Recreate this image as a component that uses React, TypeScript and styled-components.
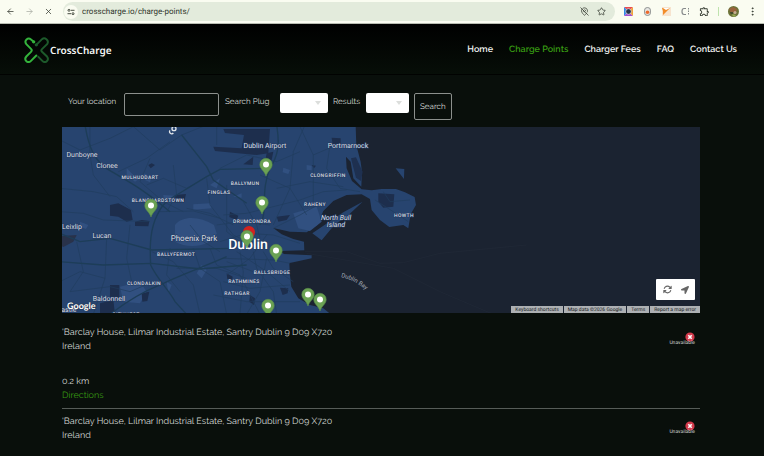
import React from "react";
import styled, { createGlobalStyle } from "styled-components";
import { ArrowLeft, ArrowRight, X, MapPinOff, Star, EllipsisVertical } from "lucide-react";
import { MdOutlineExtension } from "react-icons/md";
import { FaLocationArrow } from "react-icons/fa";
import { FaArrowsRotate } from "react-icons/fa6";

const GlobalStyle = createGlobalStyle`
  * { box-sizing: border-box; }
  html, body { margin: 0; min-height: 100%; background: #090f0b; }
  body { font-family: Raleway, Lato, "Open Sans", sans-serif; color: #d6dad6; text-rendering: geometricPrecision; }
  button, input, select { font: inherit; color: inherit; text-rendering: inherit; }
`;

const BrowserBar = styled.div`
  display: flex;
  align-items: center;
  height: 24px;
  padding: 0 2px 0 4px;
  background: #fafcf1;
  border-bottom: 1px solid #b9bdb2;
  color: #454b40;
`;

const BarButton = styled.button<{ $faded?: boolean; $wide?: number }>`
  display: flex;
  align-items: center;
  justify-content: center;
  width: ${(p) => p.$wide ?? 19}px;
  height: 18px;
  padding: 0;
  border: 0;
  background: none;
  color: ${(p) => (p.$faded ? "#a9ada4" : "#353b31")};
`;

const AddressPill = styled.div`
  display: flex;
  align-items: center;
  flex: 1;
  height: 19px;
  margin: 0 4px 0 1px;
  padding: 0 5px 0 1px;
  border-radius: 10px;
  background: #e3ebdc;
`;

const SiteInfo = styled.button`
  display: flex;
  align-items: center;
  justify-content: center;
  width: 14px;
  height: 14px;
  padding: 0;
  border: 0;
  border-radius: 50%;
  background: #fafcf1;
`;

const Address = styled.input`
  flex: 1;
  min-width: 0;
  height: 16px;
  margin-left: 4px;
  padding: 0;
  border: 0;
  outline: 0;
  background: none;
  font-family: Roboto, sans-serif;
  font-size: 8px;
  color: #30372c;
`;

const Divider = styled.span`
  width: 1px;
  height: 9px;
  margin: 0 5px 0 4px;
  background: #bfe3ae;
`;

const Header = styled.header`
  display: flex;
  align-items: center;
  justify-content: space-between;
  height: 51px;
  padding: 1px 27px 0 24px;
  background: linear-gradient(#000, #070e08);
  border-bottom: 1px solid #010201;
`;

const Brand = styled.a`
  display: flex;
  align-items: center;
  gap: 1px;
  color: #f4f6f4;
  text-decoration: none;
  font-family: "Noto Sans", sans-serif;
  font-weight: 600;
  font-size: 10px;
`;

const Nav = styled.nav`
  display: flex;
  gap: 16px;
`;

const NavLink = styled.a<{ $active?: boolean }>`
  font-size: 9px;
  line-height: 12px;
  padding-top: 1px;
  font-weight: 600;
  text-decoration: none;
  color: ${(p) => (p.$active ? "#379a12" : "#f0f2f0")};
`;

const Main = styled.main`
  padding: 18px 64px 0 62px;
`;

const SearchForm = styled.form`
  display: flex;
  align-items: flex-start;
  height: 34px;
  padding-left: 6px;
  font-size: 8px;
  line-height: 17px;
`;

const FieldLabel = styled.label<{ $width: number }>`
  width: ${(p) => p.$width}px;
  white-space: nowrap;
`;

const LocationInput = styled.input`
  width: 95px;
  height: 23px;
  margin-right: 6px;
  padding: 0 6px;
  border: 1px solid #8c908d;
  border-radius: 2px;
  background: transparent;
`;

const SelectBox = styled.span<{ $width: number }>`
  position: relative;
  width: ${(p) => p.$width}px;
  height: 20px;
  margin-right: 5px;
  svg { position: absolute; right: 7px; top: 8px; pointer-events: none; }
`;

const Select = styled.select`
  display: block;
  width: 100%;
  height: 100%;
  padding: 0 14px 0 4px;
  appearance: none;
  border: 0;
  border-radius: 2px;
  background: #fff;
  color: #fff;
`;

const SearchButton = styled.button`
  height: 27px;
  padding: 0 5px;
  border: 1px solid #8c908d;
  border-radius: 2px;
  background: transparent;
`;

const MapFrame = styled.section`
  position: relative;
  height: 186px;
  overflow: hidden;
  background: #1b2331;
`;

const MapDrawing = styled.svg`
  display: block;
  width: 100%;
  height: 100%;
`;

const MapControls = styled.div`
  position: absolute;
  right: 5px;
  bottom: 13px;
  display: flex;
  height: 21px;
  padding: 0 2px 0 3px;
  border-radius: 1px;
  background: #fff;
`;

const MapControl = styled.button`
  display: flex;
  align-items: center;
  justify-content: center;
  width: 17px;
  padding: 0;
  border: 0;
  background: none;
  color: #666;
`;

const Attribution = styled.div`
  position: absolute;
  right: 0;
  bottom: 0;
  display: flex;
  gap: 1px;
`;

const attributionStyle = `
  height: 7px;
  padding: 0 4px;
  border: 0;
  background: #adb0b3;
  color: #15181c;
  font-family: Roboto, sans-serif;
  font-size: 5px;
  line-height: 8px;
  white-space: nowrap;
  text-decoration: none;
`;
const AttributionButton = styled.button`&& {${attributionStyle}}`;
const AttributionText = styled.span`${attributionStyle}`;
const AttributionLink = styled.a`${attributionStyle}`;

const GoogleMark = styled.a`
  position: absolute;
  left: 5px;
  bottom: 0;
  color: #fff;
  font-family: Lato, sans-serif;
  font-weight: 700;
  font-size: 9px;
  line-height: 14px;
  text-decoration: none;
  text-shadow: 0 0 1px #222;
`;

const Results = styled.ul`
  margin: 0;
  padding: 7px 0 0;
  list-style: none;
`;

const Result = styled.li`
  display: flex;
  justify-content: space-between;
  align-items: flex-start;
  padding: 6px 5px 5px 0;
  border-bottom: 1px solid #565c58;
  font-size: 9px;
  line-height: 14px;
`;

const Line = styled.p`
  margin: 0;
`;

const Distance = styled(Line)`
  margin-top: 21px;
`;

const Directions = styled.a`
  color: #379a12;
  text-decoration: none;
`;

const Status = styled.div`
  display: flex;
  flex-direction: column;
  align-items: flex-end;
  padding-top: 6px;
  font-family: Roboto, sans-serif;
  font-size: 5px;
  line-height: 3px;
  color: #d0d4d1;
`;

function Logo() {
  return (
    <svg width="25" height="26" viewBox="72 110 75 77" fill="none" strokeWidth="6" strokeLinecap="round" aria-hidden="true">
      <path stroke="#1d5a2b" d="M109 133 L126 116 C134 109 148 119 142 130 L126 146 C123 149 123 151 126 154 L141 168 C149 179 136 190 127 181 L115 169" />
      <path stroke="#34b33c" d="M101 124 L93 117 C84 109 71 120 79 131 L93 145 C96 148 96 151 93 154 L79 168 C70 179 84 190 93 181 L109 165" />
      <circle cx="101" cy="124" r="5" fill="#34b33c" />
      <circle cx="109" cy="133" r="5" fill="#1d5a2b" />
    </svg>
  );
}

type Label = { x: number; y: number; text: string; kind: "town" | "area" | "park" | "city" | "sea" };
const labels: Label[] = [
  { x: 20, y: 30, text: "Dunboyne", kind: "town" },
  { x: 45, y: 41, text: "Clonee", kind: "town" },
  { x: 203, y: 21, text: "Dublin Airport", kind: "town" },
  { x: 286, y: 21, text: "Portmarnock", kind: "town" },
  { x: 10, y: 102, text: "Leixlip", kind: "town" },
  { x: 40, y: 111, text: "Lucan", kind: "town" },
  { x: 47, y: 174, text: "Baldonnell", kind: "town" },
  { x: 5, y: 185, text: "castle", kind: "town" },
  { x: 78, y: 52, text: "MULHUDDART", kind: "area" },
  { x: 96, y: 75, text: "BLANCHARDSTOWN", kind: "area" },
  { x: 157, y: 67, text: "FINGLAS", kind: "area" },
  { x: 183, y: 58, text: "BALLYMUN", kind: "area" },
  { x: 266, y: 50, text: "CLONGRIFFIN", kind: "area" },
  { x: 253, y: 79, text: "RAHENY", kind: "area" },
  { x: 190, y: 96, text: "DRUMCONDRA", kind: "area" },
  { x: 342, y: 90, text: "HOWTH", kind: "area" },
  { x: 114, y: 129, text: "BALLYFERMOT", kind: "area" },
  { x: 210, y: 147, text: "BALLSBRIDGE", kind: "area" },
  { x: 182, y: 156, text: "RATHMINES", kind: "area" },
  { x: 175, y: 168, text: "RATHGAR", kind: "area" },
  { x: 82, y: 158, text: "CLONDALKIN", kind: "area" },
  { x: 64, y: 189, text: "CITYWEST", kind: "area" },
  { x: 132, y: 114, text: "Phoenix Park", kind: "park" },
  { x: 274, y: 93, text: "North Bull", kind: "sea" },
  { x: 274, y: 100, text: "Island", kind: "sea" },
  { x: 186, y: 122, text: "Dublin", kind: "city" },
];

const MapLabel = styled.text<{ $kind: Label["kind"] }>`
  font-family: Roboto, sans-serif;
  text-anchor: middle;
  fill: ${(p) => (p.$kind === "city" ? "#fff" : "#d9dde3")};
  font-size: ${(p) => ({ town: 7, area: 5, park: 8, city: 14, sea: 7 })[p.$kind]}px;
  font-weight: ${(p) => (p.$kind === "area" || p.$kind === "city" ? 500 : 400)};
  font-style: ${(p) => (p.$kind === "sea" ? "italic" : "normal")};
  letter-spacing: ${(p) => (p.$kind === "area" ? "0.08em" : "normal")};
  paint-order: stroke;
  stroke: #223a60;
  stroke-width: 1px;
`;

const pins = [[204, 49], [200, 87], [89, 90], [185, 121], [214, 135], [246, 179], [258, 184], [206, 190]];

const motorways = [
  "M75 0 C85 60 100 110 155 140 C215 175 260 200 330 260",
  "M365 30 L440 125 L460 165 L560 235",
  "M650 0 C660 60 655 90 630 130 C600 200 625 260 600 300",
  "M620 130 L480 133 L440 155 L355 207 C310 230 300 250 285 285 C268 330 270 380 272 420 C290 460 330 500 345 530 L380 568",
  "M0 325 L60 350 L150 340 L275 375 L520 370",
  "M0 410 L130 420 L275 415 L420 432 L560 420",
  "M150 568 C200 530 250 500 300 480 C360 450 420 430 500 395",
];
const roads = [
  "M0 45 L60 75 L150 40 L230 0", "M90 0 L90 90 L100 150 L150 215", "M0 190 L100 200 L170 215 L220 260",
  "M175 140 L260 100 L330 50", "M215 0 L300 75 L365 30 L440 0", "M270 100 L240 170 L310 230 L370 260",
  "M260 180 L310 160 L380 190 L440 155", "M340 120 L350 210 L320 260", "M470 0 L470 60", "M500 180 L500 320 L540 350",
  "M440 160 L450 240 L520 330 L560 350", "M480 130 L560 90 L650 110 L720 80", "M735 0 L700 80 L690 190 L640 300",
  "M810 60 L800 130 L840 190 L900 200", "M650 190 L750 170 L850 185", "M640 245 L720 225 L790 200 L860 195",
  "M640 310 L720 270 L790 230", "M600 150 L690 190 L740 270", "M720 5 L760 90 L830 60", "M760 90 L760 230",
  "M0 260 L70 265 L130 285 L270 290", "M50 350 L70 440 L30 500", "M140 340 L135 460 L100 568", "M210 300 L200 400 L215 470",
  "M275 380 L340 410 L400 480 L420 568", "M330 370 L320 450 L360 500", "M400 370 L420 430 L480 470 L500 568",
  "M450 370 L470 420 L540 450 L600 568", "M540 380 L550 440 L540 568", "M580 380 L590 430 L640 500 L650 568",
  "M500 410 L580 440 L690 450", "M490 470 L570 490 L690 480", "M460 510 L560 530 L720 530", "M610 380 L640 430 L700 470",
  "M490 400 L640 405 L690 415", "M480 350 L560 325 L640 330 L720 355", "M470 300 L540 290 L630 300", "M490 270 L560 265 L640 245",
  "M550 230 L590 300 L600 340", "M380 250 L450 265 L520 300", "M300 260 L400 258 L480 280", "M620 330 L570 400 L500 450",
  "M530 380 L620 440 L690 500", "M970 200 L990 230 L1050 225", "M945 225 L1000 260 L1045 290", "M30 500 L150 485 L210 500 L280 470",
  "M0 470 L60 440 L135 460", "M350 430 L470 430 L560 460", "M390 300 L430 350 L480 380", "M620 400 L600 500 L560 568",
];
const parks = [
  "M345 300 C370 270 420 275 462 300 L470 325 C450 370 380 370 345 350Z", "M180 485 L240 470 L260 500 L240 535 L190 530Z",
  "M700 265 L770 245 L785 290 L750 318 L715 310Z", "M200 130 L225 155 L240 160 L225 170 L200 150Z", "M400 238 L450 235 L455 250 L400 254Z",
  "M310 210 L345 212 L345 232 L312 230Z", "M670 128 L690 135 L685 147 L668 142Z", "M425 420 L440 435 L425 460 L410 445Z",
  "M250 145 L275 155 L270 172 L255 165Z", "M740 120 L755 122 L755 136 L740 134Z", "M520 215 L545 205 L545 218Z", "M60 290 L85 300 L78 312 L60 305Z",
  "M320 470 L335 480 L325 505Z", "M580 460 L600 465 L590 480Z", "M450 180 L480 160 L470 190Z",
];
const darkAreas = [
  "M490 12 L630 12 L625 85 L590 90 L465 78 L460 65 L545 70 L552 30 L495 24Z", "M150 240 L175 235 L213 255 L218 285 L200 290 L175 275 L150 272Z",
  "M225 290 L245 285 L268 288 L265 304 L225 303Z", "M345 210 L378 207 L372 232 L340 232Z", "M150 480 L178 480 L178 520 L150 532Z",
  "M120 535 L160 525 L165 568 L120 568Z", "M245 505 L268 500 L262 528 L247 530Z", "M510 260 L535 272 L530 285 L508 276Z",
  "M265 120 L275 115 L285 120 L272 130Z", "M815 38 L842 40 L842 58 L818 58Z", "M500 445 L518 455 L516 468 L502 462Z",
  "M660 488 L685 490 L683 505 L668 510Z", "M650 275 L690 270 L680 285 L655 290Z", "M755 120 L768 122 L762 130Z",
  "M570 510 L585 520 L582 540 L568 530Z", "M955 205 L1003 208 L1000 245 L970 248 L955 230Z", "M620 85 L640 80 L635 105 L615 110Z", "M550 118 L580 95 L578 120Z",
];

function ChargeMap() {
  return (
    <MapDrawing viewBox="0 0 638 186" preserveAspectRatio="xMinYMid slice" role="img" aria-label="Map of charge points around Dublin">
      <g transform="translate(-2 -2) scale(.3333)">
        <path fill="#27446f" d="M0 0 H887 L889 60 L902 110 L906 140 L904 185 L880 160 L872 110 L858 95 L860 130 L876 168 L905 193 L935 196 L965 192 L1008 192 L1035 202 L1064 216 L1068 240 L1052 268 L1045 310 L1030 300 L988 306 L960 285 L935 255 L930 222 L905 208 L860 210 L820 228 L790 258 L772 300 L740 322 L690 320 L640 309 L665 328 L700 342 L732 350 L733 376 L660 378 L672 387 L755 391 L755 400 L700 412 L688 414 L690 450 L694 485 L715 520 L750 540 L790 550 L815 570 H0Z" />
        <path fill="#27446f" d="M908 230 L850 262 L757 325 L785 346 L825 298 L860 275Z M1007 130 L1033 132 L1032 162Z" />
        <path fill="#1e3050" d="M873 100 L888 97 L908 140 L903 168 L888 158Z" />
        {parks.map((d) => <path key={d} d={d} fill="#315080" />)}
        {darkAreas.map((d) => <path key={d} d={d} fill="#1d2e4d" />)}
        <path fill="#29324a" d="M5 333 L50 330 L40 350 L10 366 L0 360Z" />
        <g fill="none" stroke="#203c5e" strokeWidth="2">{roads.map((d) => <path key={d} d={d} />)}</g>
        <g fill="none" stroke="#1d3d58" strokeWidth="4">{motorways.map((d) => <path key={d} d={d} />)}</g>
        <path fill="none" stroke="#1f2735" strokeWidth="3" d="M735 380 L860 380 L960 415 L1030 413 L1140 385 L1400 360 M740 385 L1000 430 L1140 500 L1300 568" />
        <g fill="none" stroke="#e2e6eb" strokeWidth="4">
          <path d="M330 16 A6 6 0 1 0 340 24" />
          <circle cx="342" cy="11" r="6" />
        </g>
      </g>
      {labels.map((l) => (
        <MapLabel key={l.text} x={l.x} y={l.y} $kind={l.kind}>{l.text}</MapLabel>
      ))}
      <path id="bay" d="M279 150 Q294 153 307 166" fill="none" />
      <text fontFamily="Roboto, sans-serif" fontSize="6" fill="#a3aab6"><textPath href="#bay">Dublin Bay</textPath></text>
      <path fill="#d3231f" d="M187 117 C186 111 181 110 181 105 A6 6 0 0 1 193 105 C193 110 188 111 187 117Z" />
      {pins.map(([x, y]) => (
        <g key={`${x}-${y}`} transform={`translate(${x} ${y})`}>
          <path fill="#6ba254" stroke="#5b8f49" strokeWidth=".6" d="M0 0 C-1.500 -5 -6.200 -7 -6.200 -11.500 A6.200 6.200 0 0 1 6.200 -11.500 C6.200 -7 1.500 -5 0 0Z" />
          <circle cy="-11.500" r="3" fill="#fff" />
        </g>
      ))}
    </MapDrawing>
  );
}

function Picker({ id, width, options }: { id: string; width: number; options: string[] }) {
  return (
    <SelectBox $width={width}>
      <Select id={id} defaultValue="">
        <option value="" />
        {options.map((o) => <option key={o}>{o}</option>)}
      </Select>
      <svg width="6" height="4" viewBox="0 0 6 4" aria-hidden="true"><path d="M0 0h6L3 4z" fill="#dcdedc" /></svg>
    </SelectBox>
  );
}

function ChargePoint() {
  return (
    <Result>
      <div>
        <Line>'Barclay House, Lilmar Industrial Estate, Santry Dublin 9 D09 X720</Line>
        <Line>Ireland</Line>
        <Distance>0.2 km</Distance>
        <Line><Directions href="#directions">Directions</Directions></Line>
      </div>
      <Status>
        <svg width="10" height="10" viewBox="0 0 10 10" aria-hidden="true">
          <circle cx="5" cy="5" r="4.600" fill="#d33a4c" />
          <path d="M3.300 3.300l3.400 3.400M6.700 3.300L3.300 6.700" stroke="#fff" strokeWidth="1.600" />
        </svg>
        Unavailable
      </Status>
    </Result>
  );
}

export default function App() {
  return (
    <>
      <GlobalStyle />
      <BrowserBar>
        <BarButton aria-label="Back" $wide={12}><ArrowLeft size={9} /></BarButton>
        <BarButton aria-label="Forward" $faded $wide={26}><ArrowRight size={9} /></BarButton>
        <BarButton aria-label="Stop" $wide={12}><X size={9} /></BarButton>
        <BarButton as="span" $wide={8} />
        <AddressPill>
          <SiteInfo aria-label="Site information">
            <svg width="8" height="8" viewBox="0 0 8 8" fill="none" stroke="#454b40">
              <circle cx="2" cy="2.300" r="1" /><path d="M4 2.300h3.500M.5 5.700H4" /><circle cx="6" cy="5.700" r="1" />
            </svg>
          </SiteInfo>
          <Address aria-label="Address" defaultValue="crosscharge.io/charge-points/" />
          <BarButton aria-label="Location blocked" $wide={17}><MapPinOff size={9} /></BarButton>
          <BarButton aria-label="Bookmark" $wide={17}><Star size={9} /></BarButton>
        </AddressPill>
        <BarButton aria-label="Camera extension">
          <svg width="9" height="9" viewBox="0 0 9 9">
            <path fill="#e94b52" d="M0 0h9L4.500 4.500z" /><path fill="#3488e8" d="M0 0v9l4.500-4.500z" /><path fill="#a24fd0" d="M0 9h9L4.500 4.500z" /><path fill="#f1a33b" d="M9 0v9L4.500 4.500z" />
            <circle cx="4.500" cy="4.500" r="2.800" fill="#26334a" stroke="#fff" strokeWidth=".6" />
          </svg>
        </BarButton>
        <BarButton aria-label="Recorder extension">
          <svg width="7" height="9" viewBox="0 0 7 9"><rect x=".6" y=".6" width="5.800" height="7.800" rx="2.500" fill="#e8e8e4" stroke="#8e9190" /><circle cx="3.500" cy="5.300" r="1.800" fill="#ee6a2c" /></svg>
        </BarButton>
        <BarButton aria-label="Notes extension">
          <svg width="9" height="9" viewBox="0 0 9 9"><path fill="#f7e4cf" d="M0 0h9v9H0z" /><path fill="#f28c28" d="M0 1h8L1 8V4z" /><path fill="#fff" d="M1 1l3 2 4-2z" /></svg>
        </BarButton>
        <BarButton aria-label="Capture extension">
          <svg width="9" height="9" viewBox="0 0 9 9" fill="none" stroke="#85898a"><path d="M5 1.500H3Q1 1.500 1 4.500T3 7.500h2" strokeWidth="1.200" /><path d="M7.500 1v7" strokeDasharray="1.500 1" /></svg>
        </BarButton>
        <BarButton aria-label="Extensions"><MdOutlineExtension size={11} /></BarButton>
        <Divider />
        <BarButton aria-label="Profile">
          <svg width="11" height="11" viewBox="0 0 11 11"><circle cx="5.500" cy="5.500" r="5.500" fill="#6c7338" /><path fill="#98623c" d="M1 3l4-2 4 2-1 3-5 1z" /><path fill="#444b2a" d="M2 6h3v3H3z" /><circle cx="7" cy="6.500" r="1.500" fill="#c5ae92" /><path fill="#99ae54" d="M3 8l5 1-2 2z" /></svg>
        </BarButton>
        <BarButton aria-label="Menu"><EllipsisVertical size={11} /></BarButton>
      </BrowserBar>
      <Header>
        <Brand href="#home"><Logo />CrossCharge</Brand>
        <Nav>
          <NavLink href="#home">Home</NavLink>
          <NavLink href="#points" $active>Charge Points</NavLink>
          <NavLink href="#fees">Charger Fees</NavLink>
          <NavLink href="#faq">FAQ</NavLink>
          <NavLink href="#contact">Contact Us</NavLink>
        </Nav>
      </Header>
      <Main>
        <SearchForm onSubmit={(e) => e.preventDefault()}>
          <FieldLabel htmlFor="location" $width={56}>Your location</FieldLabel>
          <LocationInput id="location" />
          <FieldLabel htmlFor="plug" $width={55}>Search Plug</FieldLabel>
          <Picker id="plug" width={48} options={["Type 2", "CCS", "CHAdeMO"]} />
          <FieldLabel htmlFor="results" $width={33}>Results</FieldLabel>
          <Picker id="results" width={43} options={["25", "50", "100"]} />
          <SearchButton>Search</SearchButton>
        </SearchForm>
        <MapFrame>
          <ChargeMap />
          <GoogleMark href="#google">Google</GoogleMark>
          <MapControls>
            <MapControl aria-label="Reset map"><FaArrowsRotate size={9} /></MapControl>
            <MapControl aria-label="My location"><FaLocationArrow size={8} /></MapControl>
          </MapControls>
          <Attribution>
            <AttributionButton>Keyboard shortcuts</AttributionButton>
            <AttributionText>Map data ©2026 Google</AttributionText>
            <AttributionLink href="#terms">Terms</AttributionLink>
            <AttributionLink href="#report">Report a map error</AttributionLink>
          </Attribution>
        </MapFrame>
        <Results>
          <ChargePoint />
          <ChargePoint />
        </Results>
      </Main>
    </>
  );
}
